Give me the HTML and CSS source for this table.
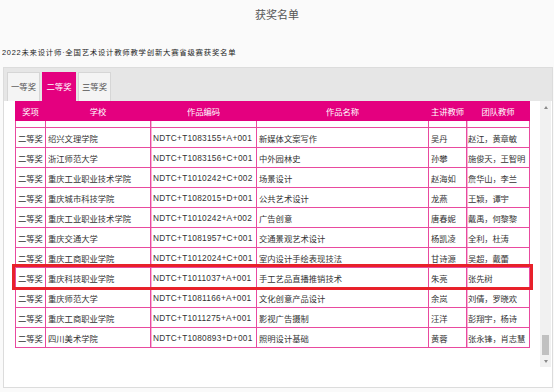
FILE: index.html
```html
<!doctype html>
<html lang="zh-CN">
	<head>
		<meta charset="UTF-8" />
		<meta name="viewport" content="width=device-width, initial-scale=1.0" />
		<title>获奖名单</title>
		<link rel="stylesheet" href="styles.css">
	</head>
	<body>
		<h1 class="page-title">获奖名单</h1>
		<p class="subtitle">2022未来设计师·全国艺术设计教师教学创新大赛省级赛获奖名单</p>

		<div class="panel">
			<div class="tab-bar">
				<div class="tab">一等奖</div>
				<div class="tab active">二等奖</div>
				<div class="tab">三等奖</div>
			</div>

			<div class="panel-body">
				<div class="table-view">
					<table class="award-table">
						<colgroup>
							<col style="width: 30px" />
							<col style="width: 105px" />
							<col style="width: 106px" />
							<col style="width: 172px" />
							<col style="width: 38px" />
							<col style="width: 63px" />
						</colgroup>
						<thead>
							<tr>
								<th>奖项</th>
								<th>学校</th>
								<th>作品编码</th>
								<th>作品名称</th>
								<th>主讲教师</th>
								<th>团队教师</th>
							</tr>
						</thead>
						<tbody>
							<tr class="cut-row"><td></td><td></td><td></td><td></td><td></td><td></td></tr>
							<tr><td>二等奖</td><td>绍兴文理学院</td><td>NDTC+T1083155+A+001</td><td>新媒体文案写作</td><td>吴丹</td><td>赵江，黄章敏</td></tr>
							<tr><td>二等奖</td><td>浙江师范大学</td><td>NDTC+T1083156+C+001</td><td>中外园林史</td><td>孙攀</td><td>施俊天，王智明</td></tr>
							<tr><td>二等奖</td><td>重庆工业职业技术学院</td><td>NDTC+T1010242+C+002</td><td>场景设计</td><td>赵海如</td><td>詹华山，李兰</td></tr>
							<tr><td>二等奖</td><td>重庆城市科技学院</td><td>NDTC+T1082015+D+001</td><td>公共艺术设计</td><td>龙燕</td><td>王颖，谭宇</td></tr>
							<tr><td>二等奖</td><td>重庆工业职业技术学院</td><td>NDTC+T1010242+A+002</td><td>广告创意</td><td>唐春妮</td><td>戴禹，何黎黎</td></tr>
							<tr><td>二等奖</td><td>重庆交通大学</td><td>NDTC+T1081957+C+001</td><td>交通景观艺术设计</td><td>杨凯凌</td><td>全利，杜涛</td></tr>
							<tr><td>二等奖</td><td>重庆工商职业学院</td><td>NDTC+T1012024+C+001</td><td>室内设计手绘表现技法</td><td>甘诗源</td><td>吴超，戴蕾</td></tr>
							<tr><td>二等奖</td><td>重庆科技职业学院</td><td>NDTC+T1011037+A+001</td><td>手工艺品直播推销技术</td><td>朱亮</td><td>张先树</td></tr>
							<tr><td>二等奖</td><td>重庆师范大学</td><td>NDTC+T1081166+A+001</td><td>文化创意产品设计</td><td>余岚</td><td>刘倩，罗晓欢</td></tr>
							<tr><td>二等奖</td><td>重庆工商职业学院</td><td>NDTC+T1011275+A+001</td><td>影视广告摄制</td><td>汪洋</td><td>彭翔宇，杨诗</td></tr>
							<tr><td>二等奖</td><td>四川美术学院</td><td>NDTC+T1080893+D+001</td><td>照明设计基础</td><td>黄蓉</td><td>张永锋，肖志慧</td></tr>
						</tbody>
					</table>
				</div>

				<div class="scrollbar">
					<div class="sb-btn sb-up"></div>
					<div class="sb-track"><div class="sb-thumb"></div></div>
					<div class="sb-btn sb-down"></div>
				</div>

				<!-- 标注框 -->
				<div class="mark-box"></div>
			</div>
		</div>
	</body>
</html>
```

FILE: styles.css
```css
* {
	margin: 0;
	padding: 0;
	box-sizing: border-box;
}

body {
	font-family: "Liberation Sans", "Noto Sans CJK SC", sans-serif;
	background: #fafafa;
	color: #333;
	width: 554px;
	height: 392px;
	overflow: hidden;
}

.page-title {
	text-align: center;
	font-size: 11px;
	font-weight: normal;
	line-height: 15px;
	color: #555;
	padding-top: 8px;
}

.subtitle {
	font-size: 7.4px;
	letter-spacing: 0.75px;
	line-height: 12px;
	color: #222;
	margin: 24px 0 8px 2px;
}

.panel {
	margin: 0 1px 0 3px;
	border: 1px solid #dcdcdc;
	background: #fff;
}

.tab-bar {
	display: flex;
	gap: 2px;
	height: 33px;
	padding: 4px 0 0 3px;
	background: #e6e6e6;
}

.tab {
	width: 33px;
	height: 29px;
	line-height: 28px;
	text-align: center;
	font-size: 8.4px;
	color: #555;
	background: #f4f4f4;
	border: 1px solid #d6d6d6;
	border-bottom: none;
}

.tab.active {
	width: 34px;
	background: #e4007f;
	border-color: #e4007f;
	color: #fff;
}

.panel-body {
	position: relative;
	display: flex;
	align-items: flex-start;
	height: 286px;
	padding: 0 1px 0 11px;
}

.table-view {
	width: 516px;
	height: 266px;
	overflow: hidden;
}

.award-table {
	width: 514px;
	table-layout: fixed;
	border-collapse: collapse;
	font-size: 8.3px;
}

.award-table th {
	height: 19px;
	background: #e4007f;
	color: #fff;
	font-weight: normal;
	text-align: center;
	border: 1px solid #e4007f;
}

.award-table td {
	height: 20px;
	padding: 0 0 0 2px;
	white-space: nowrap;
	overflow: hidden;
	color: #333;
	border: 1px solid #e94a9f;
}

.award-table td:nth-child(3) {
	letter-spacing: 0.25px;
}

.award-table td:nth-child(6) {
	padding-left: 1px;
	letter-spacing: -0.15px;
}

.award-table td:nth-child(3),
.award-table td:nth-child(6) {
	box-shadow: inset 1px 0 #f6b4d7;
}

.award-table .cut-row td {
	height: 7px;
	border-top-color: #f6b4d7;
}

.mark-box {
	position: absolute;
	left: 8px;
	top: 163px;
	width: 521px;
	height: 26px;
	border: 3px solid #e8212a;
}

.scrollbar {
	display: flex;
	flex-direction: column;
	width: 11px;
	height: 266px;
	margin-left: 9px;
	background: #f1f1f1;
}

.sb-btn {
	display: flex;
	align-items: center;
	justify-content: center;
	height: 12px;
}

.sb-up::before {
	content: "";
	border-left: 2.5px solid transparent;
	border-right: 2.5px solid transparent;
	border-bottom: 3px solid #8a8a8a;
}

.sb-down::before {
	content: "";
	border-left: 2.5px solid transparent;
	border-right: 2.5px solid transparent;
	border-top: 3px solid #8a8a8a;
}

.sb-track {
	flex: 1;
	display: flex;
	flex-direction: column;
	justify-content: flex-end;
	align-items: center;
}

.sb-thumb {
	width: 7px;
	height: 20px;
	background: #c1c1c1;
}
```
